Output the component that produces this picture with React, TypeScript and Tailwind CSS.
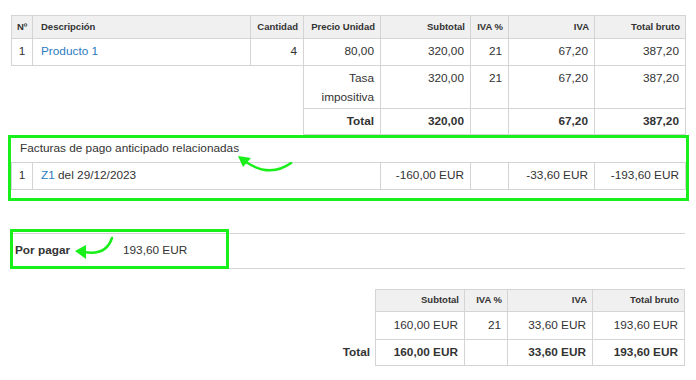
import React from 'react';

// ── Shared cell styles ───────────────────────────────────────────────────────

const bd = 'border border-[#d4d4d4]';
const th = `${bd} bg-[#f0f0f0] px-[5px] text-[9.5px] font-bold text-[#333] text-right whitespace-nowrap`;
const td = `${bd} px-[6px] text-right align-top`;

const topCols = [21, 218, 53, 77, 90, 38, 86, 91];

function Cols({ widths }: { widths: number[] }) {
  return (
    <colgroup>
      {widths.map((w, i) => (
        <col key={i} style={{ width: w }} />
      ))}
    </colgroup>
  );
}

function Arrow({ d, head }: { d: string; head: string }) {
  return (
    <>
      <path d={d} fill="none" stroke="#19ef19" strokeWidth={2.5} strokeLinecap="round" />
      <polygon points={head} fill="#19ef19" />
    </>
  );
}

export default function App() {
  return (
    <div className="relative w-[696px] h-[380px] overflow-hidden bg-white text-[#333] text-[11.8px] font-['Liberation_Sans',Arial,sans-serif]">
      <div className="pl-[11px] pt-[15px] w-[685px]">
        {/* Lines table */}
        <table className="w-[674px] table-fixed border-collapse">
          <Cols widths={topCols} />
          <thead>
            <tr className="h-[23px]">
              <th className={`${th} !text-center`}>Nº</th>
              <th className={`${th} !text-left !px-[8px]`}>Descripción</th>
              <th className={th}>Cantidad</th>
              <th className={th}>Precio Unidad</th>
              <th className={th}>Subtotal</th>
              <th className={th}>IVA %</th>
              <th className={th}>IVA</th>
              <th className={th}>Total bruto</th>
            </tr>
          </thead>
          <tbody>
            <tr className="h-[27px]">
              <td className={`${bd} text-center`}>1</td>
              <td className={`${bd} px-[8px] text-[#2b7bc0]`}>Producto 1</td>
              <td className={`${td} !align-middle`}>4</td>
              <td className={`${td} !align-middle`}>80,00</td>
              <td className={`${td} !align-middle`}>320,00</td>
              <td className={`${td} !align-middle`}>21</td>
              <td className={`${td} !align-middle`}>67,20</td>
              <td className={`${td} !align-middle`}>387,20</td>
            </tr>
            <tr className="h-[43px] leading-[19px]">
              <td />
              <td />
              <td />
              <td className={`${td} pt-[3px]`}>Tasa impositiva</td>
              <td className={`${td} pt-[3px]`}>320,00</td>
              <td className={`${td} pt-[3px]`}>21</td>
              <td className={`${td} pt-[3px]`}>67,20</td>
              <td className={`${td} pt-[3px]`}>387,20</td>
            </tr>
            <tr className="h-[26px] font-bold">
              <td />
              <td />
              <td />
              <td className={`${td} !align-middle`}>Total</td>
              <td className={`${td} !align-middle`}>320,00</td>
              <td className={`${td} !align-middle`}></td>
              <td className={`${td} !align-middle`}>67,20</td>
              <td className={`${td} !align-middle`}>387,20</td>
            </tr>
          </tbody>
        </table>

        {/* Related deposit invoices */}
        <div className="h-[27px] flex items-center pl-[9px]">Facturas de pago anticipado relacionadas</div>
        <table className="w-[674px] table-fixed border-collapse">
          <Cols widths={[21, 348, 90, 38, 86, 91]} />
          <tbody>
            <tr className="h-[27px]">
              <td className={`${bd} text-center`}>1</td>
              <td className={`${bd} px-[8px]`}>
                <span className="text-[#2b7bc0]">Z1</span> del 29/12/2023
              </td>
              <td className={`${td} !align-middle`}>-160,00 EUR</td>
              <td className={`${td} !align-middle`}></td>
              <td className={`${td} !align-middle`}>-33,60 EUR</td>
              <td className={`${td} !align-middle`}>-193,60 EUR</td>
            </tr>
          </tbody>
        </table>

        {/* Amount to pay */}
        <div className="mt-[43px] h-[36px] w-[674px] border-y border-[#d4d4d4] flex items-center pl-[4px]">
          <span className="w-[108px] font-bold">Por pagar</span>
          <span>193,60 EUR</span>
        </div>

        {/* Summary */}
        <div className="mt-[20px] flex justify-end">
          <table className="table-fixed border-collapse">
            <Cols widths={[60, 89, 43, 85, 92]} />
            <thead>
              <tr className="h-[22px]">
                <th />
                <th className={th}>Subtotal</th>
                <th className={th}>IVA %</th>
                <th className={th}>IVA</th>
                <th className={th}>Total bruto</th>
              </tr>
            </thead>
            <tbody>
              <tr className="h-[28px]">
                <td />
                <td className={`${td} !align-middle`}>160,00 EUR</td>
                <td className={`${td} !align-middle`}>21</td>
                <td className={`${td} !align-middle`}>33,60 EUR</td>
                <td className={`${td} !align-middle`}>193,60 EUR</td>
              </tr>
              <tr className="h-[26px] font-bold">
                <td className="text-right pr-[5px]">Total</td>
                <td className={`${td} !align-middle`}>160,00 EUR</td>
                <td className={`${td} !align-middle`}></td>
                <td className={`${td} !align-middle`}>33,60 EUR</td>
                <td className={`${td} !align-middle`}>193,60 EUR</td>
              </tr>
            </tbody>
          </table>
        </div>
      </div>

      {/* Annotation overlays */}
      <div className="absolute left-[8px] top-[135px] w-[681px] h-[66px] border-[3px] border-[#19ef19]" />
      <div className="absolute left-[10px] top-[229px] w-[219px] h-[40px] border-[3px] border-[#19ef19]" />
      <svg className="absolute left-0 top-0 pointer-events-none" width={696} height={380}>
        <Arrow d="M291 163 Q270 178 246 162" head="238,156 251,158 243,167" />
        <Arrow d="M112 238 Q106 256 84 252" head="75,251 86,245 86,259" />
      </svg>
    </div>
  );
}
